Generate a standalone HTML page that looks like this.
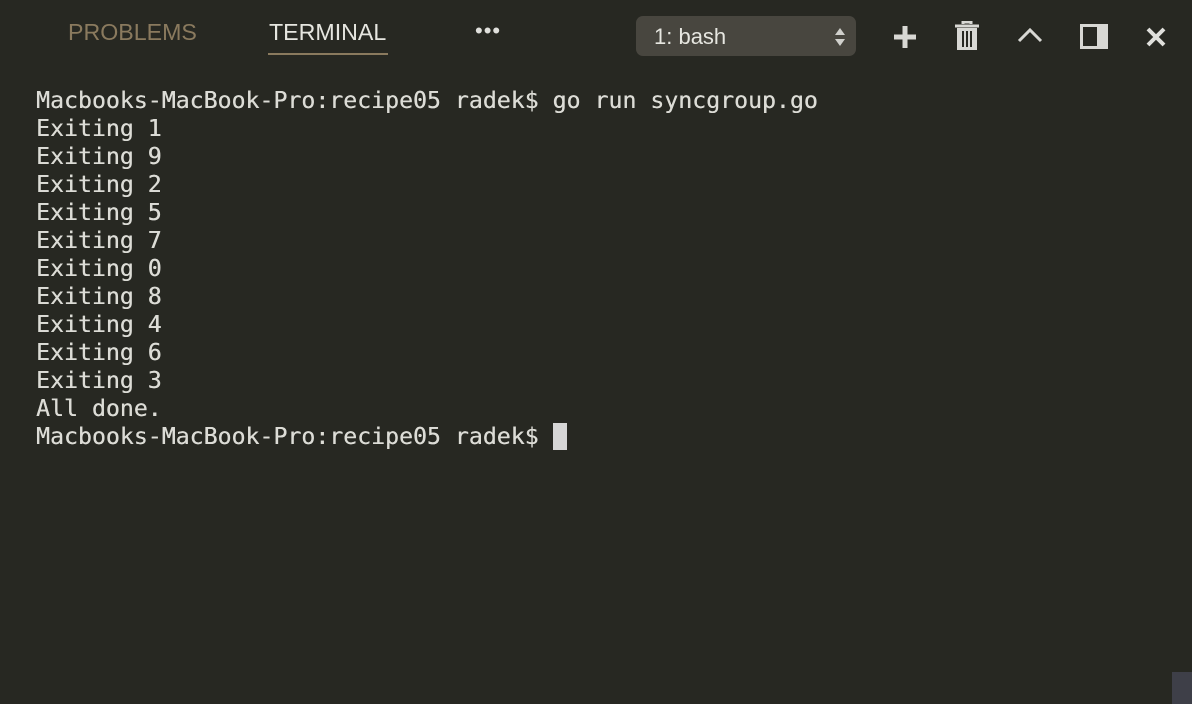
<!DOCTYPE html>
<html><head><meta charset="utf-8"><style>
html,body{margin:0;padding:0;}
body{width:1192px;height:704px;background:#272822;position:relative;overflow:hidden;font-family:"Liberation Sans",sans-serif;}
.tab{position:absolute;top:17px;font-size:23.2px;line-height:30px;}
.t1{left:68px;color:#8a7a5e;}
.t2{left:269px;color:#e6e6e0;}
.ul{position:absolute;left:268px;top:53px;width:120px;height:2px;background:#8a7a5e;}
.dots{position:absolute;left:475px;top:18px;color:#e0e0dc;font-size:22px;letter-spacing:1px;}
.dd{position:absolute;left:636px;top:16px;width:220px;height:40px;background:#48463f;border-radius:7px;color:#e6e6e0;font-size:22px;}
.dd span{position:absolute;left:18px;top:8px;}
.term{position:absolute;left:36px;top:87px;font-family:"DejaVu Sans Mono","Liberation Mono",monospace;font-size:23.2px;line-height:28px;color:#dcdcd6;white-space:pre;text-shadow:0.3px 0 0 #dcdcd6;}
.cur{display:inline-block;width:14px;height:27px;background:#d6d6d6;vertical-align:-6px;}
svg{position:absolute;}
</style></head><body>
<div class="tab t1">PROBLEMS</div>
<div class="tab t2">TERMINAL</div>
<div class="ul"></div>
<div class="dots">•••</div>
<div class="dd"><span>1: bash</span>
<svg style="left:198px;top:11px" width="12" height="20"><path d="M1 8 L6 1 L11 8Z M1 12 L6 19 L11 12Z" fill="#d0d0cc"/></svg></div>
<svg style="left:893px;top:25px" width="24" height="24"><path d="M12 1V23M1 12H23" stroke="#d8d8d4" stroke-width="5"/></svg>
<svg style="left:954px;top:21px" width="26" height="30"><path d="M9 3V1H17V3M1 5H25" stroke="#d8d8d4" stroke-width="3" fill="none"/><rect x="3" y="7" width="20" height="22" fill="#d8d8d4"/><path d="M9 10V26M13 10V26M17 10V26" stroke="#272822" stroke-width="2"/></svg>
<svg style="left:1017px;top:26px" width="26" height="18"><path d="M2 15L13 4L24 15" stroke="#d8d8d4" stroke-width="3" fill="none"/></svg>
<svg style="left:1080px;top:24px" width="28" height="25"><rect x="1.5" y="1.5" width="25" height="22" fill="none" stroke="#d8d8d4" stroke-width="3"/><rect x="17" y="1" width="10" height="23" fill="#d8d8d4"/></svg>
<svg style="left:1146px;top:27px" width="20" height="20"><path d="M2 2L18 18M18 2L2 18" stroke="#e0e0dc" stroke-width="4"/></svg>
<div class="term">Macbooks-MacBook-Pro:recipe05 radek$ go run syncgroup.go
Exiting 1
Exiting 9
Exiting 2
Exiting 5
Exiting 7
Exiting 0
Exiting 8
Exiting 4
Exiting 6
Exiting 3
All done.
Macbooks-MacBook-Pro:recipe05 radek$ <span class="cur"></span></div>
<div style="position:absolute;left:1172px;top:672px;width:20px;height:32px;background:#3e3f48"></div>
</body></html>
